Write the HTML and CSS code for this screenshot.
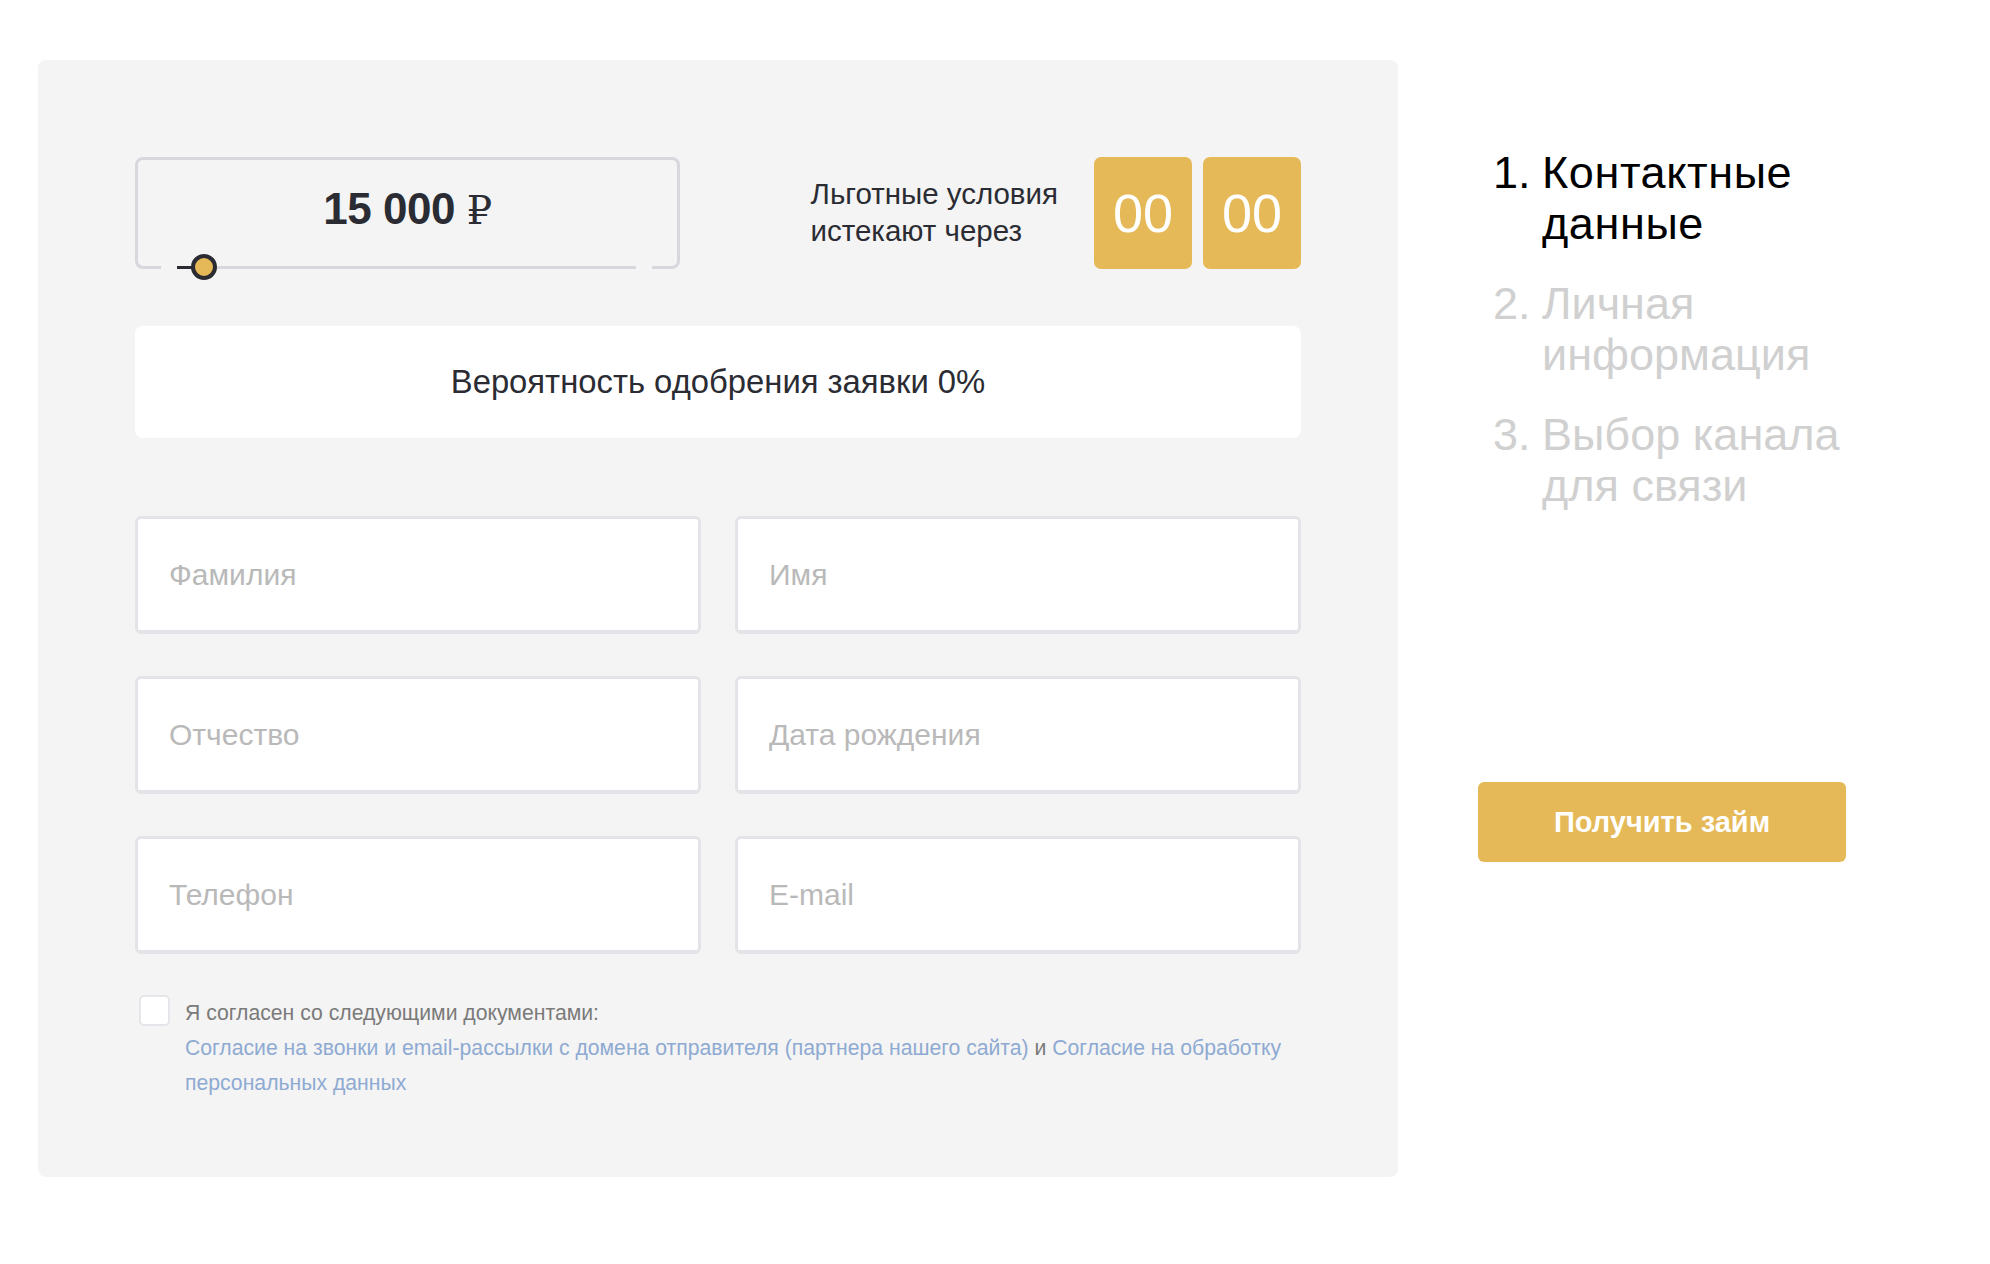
FILE: index.html
```html
<!DOCTYPE html>
<html lang="ru">
<head>
    <meta charset="UTF-8">
    <meta name="viewport" content="width=device-width, initial-scale=1.0">
    <title>Получить займ</title>
    <link rel="stylesheet" href="styles.css">
</head>
<body>
    <div class="page">
        <div class="card">
            <div class="top-row">
                <div class="amount">
                    <div class="amount-value">15 000 <span class="rub">₽</span></div>
                    <div class="slider">
                        <div class="slider-track">
                            <div class="slider-fill"></div>
                            <div class="slider-thumb"></div>
                        </div>
                    </div>
                </div>
                <div class="timer">
                    <div class="timer-label">Льготные условия<br>истекают через</div>
                    <div class="timer-box">00</div>
                    <div class="timer-box">00</div>
                </div>
            </div>

            <div class="chance">Вероятность одобрения заявки 0%</div>

            <div class="fields">
                <input class="field" type="text" placeholder="Фамилия">
                <input class="field" type="text" placeholder="Имя">
                <input class="field" type="text" placeholder="Отчество">
                <input class="field" type="text" placeholder="Дата рождения">
                <input class="field" type="text" placeholder="Телефон">
                <input class="field" type="text" placeholder="E-mail">
            </div>

            <div class="agree">
                <span class="checkbox"></span>
                <p class="agree-text">
                    Я согласен со следующими документами:<br>
                    <a href="#">Согласие на звонки и email-рассылки с домена отправителя (партнера нашего сайта)</a> и <a href="#">Согласие на обработку персональных данных</a>
                </p>
            </div>
        </div>

        <div class="side">
            <div class="steps">
                <div class="step active"><span class="step-num">1.</span><span>Контактные данные</span></div>
                <div class="step"><span class="step-num">2.</span><span>Личная информация</span></div>
                <div class="step"><span class="step-num">3.</span><span>Выбор канала для связи</span></div>
            </div>
            <button class="submit">Получить займ</button>
        </div>
    </div>
</body>
</html>
```

FILE: styles.css
```css
body {
    margin: 0;
    background-color: #fff;
    color: #2b2c33;
    font-family: "Liberation Sans", Arial, sans-serif;
}
.page {
    display: flex;
    align-items: flex-start;
    gap: 80px;
    padding: 60px 0 0 38px;
}
.card {
    width: 1360px;
    height: 1117px;
    box-sizing: border-box;
    padding: 97px;
    background-color: #f4f4f4;
    border-radius: 8px;
}
.top-row {
    display: flex;
    justify-content: space-between;
    align-items: center;
}
.amount {
    position: relative;
    width: 545px;
    height: 112px;
    box-sizing: border-box;
    border: 3px solid #d7d7dd;
    border-radius: 8px;
    display: flex;
    justify-content: center;
    align-items: center;
    padding-bottom: 8px;
}
.amount-value {
    font-size: 44px;
    font-weight: bold;
    letter-spacing: -0.5px;
}
.rub {
    font-family: "DejaVu Serif", serif;
    font-weight: normal;
    font-size: 40px;
}
.slider {
    position: absolute;
    left: 23px;
    right: 25px;
    bottom: -3px;
    height: 3px;
    padding: 0 16px;
    background-color: #f4f4f4;
}
.slider-track {
    position: relative;
    height: 3px;
    background-color: #d7d7dd;
}
.slider-fill {
    position: absolute;
    left: 0;
    top: 0;
    width: 26px;
    height: 3px;
    background-color: #2b2c33;
}
.slider-thumb {
    position: absolute;
    left: 14px;
    top: -12px;
    width: 18px;
    height: 18px;
    border: 4px solid #2b2c33;
    border-radius: 50%;
    background-color: #e5b957;
}
.timer {
    display: flex;
    align-items: center;
}
.timer-label {
    font-size: 29.5px;
    line-height: 37px;
    margin-right: 25px;
    margin-top: -2px;
}
.timer-box {
    width: 98px;
    height: 112px;
    margin-left: 11px;
    border-radius: 7px;
    background-color: #e5b957;
    color: #fff;
    font-size: 54px;
    display: flex;
    justify-content: center;
    align-items: center;
}
.chance {
    margin-top: 57px;
    height: 112px;
    background-color: #fff;
    border-radius: 8px;
    display: flex;
    justify-content: center;
    align-items: center;
    font-size: 32.8px;
}
.fields {
    margin-top: 78px;
    display: grid;
    grid-template-columns: 1fr 1fr;
    column-gap: 34px;
    row-gap: 42px;
}
.field {
    height: 118px;
    box-sizing: border-box;
    border: 3px solid #e3e3e8;
    border-bottom-width: 4px;
    border-radius: 6px;
    background-color: #fff;
    padding: 0 31px;
    font-family: inherit;
    font-size: 30px;
    color: #2b2c33;
    outline: none;
}
.field::placeholder {
    color: #b9b9b9;
}
.agree {
    margin-top: 41px;
    display: flex;
    gap: 15px;
    padding-left: 4px;
}
.checkbox {
    flex: none;
    width: 31px;
    height: 31px;
    box-sizing: border-box;
    border: 2px solid #e6e6ea;
    border-radius: 5px;
    background-color: #fff;
}
.agree-text {
    margin: 0;
    font-size: 21.2px;
    line-height: 35px;
    color: #7a7a7a;
}
.agree-text a {
    color: #8eaad2;
    text-decoration: none;
}
.side {
    width: 420px;
    display: flex;
    flex-direction: column;
}
.steps {
    margin-top: 87px;
    padding-left: 15px;
    width: 400px;
    box-sizing: border-box;
    display: flex;
    flex-direction: column;
    gap: 29px;
}
.step {
    display: flex;
    font-size: 45px;
    line-height: 51px;
    color: #d0d0d0;
}
.step.active {
    color: #000;
    letter-spacing: 0.6px;
}
.step-num {
    flex: none;
    width: 49px;
    letter-spacing: 0;
}
.submit {
    margin-top: 271px;
    width: 368px;
    height: 80px;
    border: none;
    border-radius: 6px;
    background-color: #e5b957;
    color: #fff;
    font-family: inherit;
    font-size: 29px;
    font-weight: bold;
    cursor: pointer;
}
```
